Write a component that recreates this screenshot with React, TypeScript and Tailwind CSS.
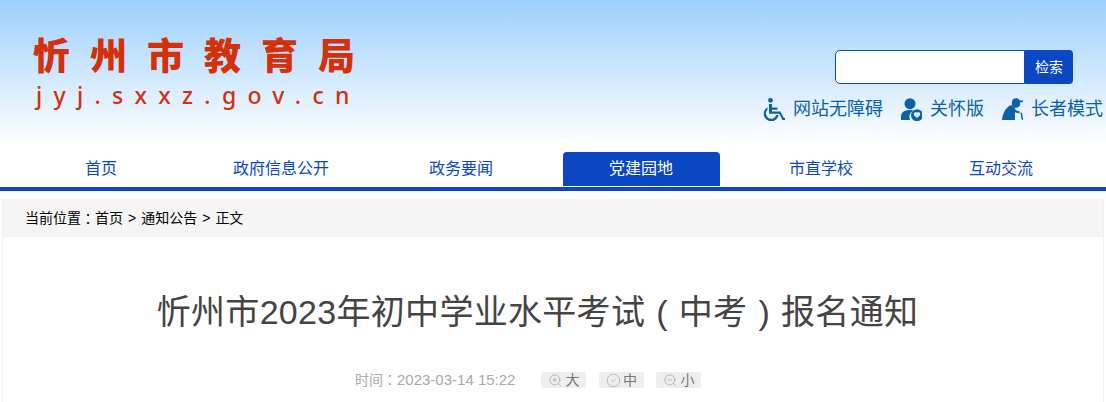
import { ZoomIn, ZoomOut, CircleCheck } from 'lucide-react'

const NAV = ['首页', '政府信息公开', '政务要闻', '党建园地', '市直学校', '互动交流']
const CJK = { fontFamily: '"Liberation Sans", "Noto Sans CJK SC", sans-serif' }
// centred full-width colon, as in the reference
const PUNCT = { fontFamily: '"Noto Sans CJK TC", sans-serif' }

function WheelchairIcon() {
  return (
    <svg viewBox="3 2 22 24" className="h-[24px] w-[22px] fill-[#0b62a8]">
      <circle cx="10.500" cy="5.300" r="2.400" />
      <path d="M9 9h3v3.500h5.500v2.200H12v1.800h8.500l3.300 6.500h1.200v2h-2.600l-3-6.300H9z" />
      <path d="M7.500 12.200v2.500a5.300 5.300 0 1 0 8.800 5.300h2.300a7.500 7.500 0 1 1-11.100-7.800z" />
    </svg>
  )
}

function CareIcon() {
  return (
    <svg viewBox="3 2 22 24" className="h-[24px] w-[22px] fill-[#0b62a8]">
      <circle cx="13" cy="8.700" r="5.500" />
      <path d="M4 25v-3.500c0-3.800 3-6.500 9-6.500 1.200 0 2.300.1 3.200.4a7.800 7.800 0 0 0-3.300 9.600z" />
      <path
        fillRule="evenodd"
        d="M20 14.200a6 6 0 1 1 0 12 6 6 0 0 1 0-12zm0 3.600c-1-.9-3.200-.4-3.200 1.400 0 1.500 1.800 2.600 3.200 3.500 1.400-.9 3.200-2 3.200-3.500 0-1.800-2.200-2.300-3.200-1.400z"
      />
    </svg>
  )
}

function ElderIcon() {
  return (
    <svg viewBox="3 2 22 24" className="h-[24px] w-[22px] fill-[#0b62a8]">
      <path d="M14 6.500c.3-2 2-3.200 4-3.200 1.700 0 3 .8 3.700 2.200H25v1.700h-3a4.200 4.200 0 1 1-8 .3z" />
      <path d="M12 10.500c2-.6 4 .3 4.800 2.300l.9 2.400 4 1.400-.6 1.900-4.100-1.200V25H4c.5-6 3.500-12 8-14.500z" />
      <path d="M22.300 17.500h1.500l1.500 7.500h-1.500z" />
    </svg>
  )
}

function FontButton({ icon, label }: { icon: React.ReactNode; label: string }) {
  return (
    <span className="flex h-[16px] w-[45px] items-center justify-center gap-[2px] rounded-[3px] bg-[#eeeeee] text-[14px] text-[#777777]">
      {icon}
      {label}
    </span>
  )
}

export default function App() {
  return (
    <div className="h-[402px] w-[1106px] overflow-hidden bg-white" style={CJK}>
      <header className="flex h-[145px] justify-between bg-gradient-to-b from-[#9dcfff] to-white">
        <div className="pl-[33px] pt-[35px]">
          <div className="text-[37px] font-black leading-[46px] tracking-[20px] text-[#d4300a]">忻州市教育局</div>
          <div
            className="ml-[3px] text-[23px] font-medium leading-[29px] tracking-[11.300px] text-[#d4300a]"
            style={{ fontFamily: '"Noto Sans", sans-serif' }}
          >
            jyj.sxxz.gov.cn
          </div>
        </div>
        <div className="flex flex-col items-end pr-[3px] pt-[50px]">
          <div className="mr-[30px] flex h-[34px] w-[238px]">
            <div className="flex-1 rounded-l-[5px] border border-[#0b47c2] bg-white" />
            <button className="w-[48px] rounded-r-[4px] bg-[#0b47c2] text-[14px] text-white">检索</button>
          </div>
          <div className="mt-[12px] flex items-center text-[18px] leading-[26px] text-[#0b62a8]">
            <WheelchairIcon />
            <span className="ml-[8px]">网站无障碍</span>
            <span className="ml-[17px]"><CareIcon /></span>
            <span className="ml-[8px]">关怀版</span>
            <span className="ml-[17px]"><ElderIcon /></span>
            <span className="ml-[8px]">长者模式</span>
          </div>
        </div>
      </header>

      <nav className="flex h-[46px] border-b-4 border-[#0b47c2] pl-[11px] pt-[7px]">
        {NAV.map((item, i) => (
          <div key={item} className="flex h-[34px] w-[180px] justify-center">
            <a
              className={
                i === 3
                  ? 'flex h-full w-[157px] items-center justify-center rounded-t-[4px] bg-[#0b47c2] text-[16px] text-white'
                  : 'flex h-full items-center text-[16px] text-[#0b47c2]'
              }
            >
              {item}
            </a>
          </div>
        ))}
      </nav>

      <main className="mx-[2px] mt-[8px] h-[220px] border-x border-[#f0f0f0]">
        <div className="flex h-[38px] items-center bg-[#f5f5f5] pl-[22px] text-[14px] text-black">
          当前位置<span style={PUNCT}>：</span>首页
          <span className="mx-[5px]">&gt;</span>通知公告
          <span className="mx-[5px]">&gt;</span>正文
        </div>
        <h1 className="mt-[51px] pr-[31px] text-center text-[34px] font-normal leading-[48px] tracking-[0.300px] text-[#444444]">
          忻州市2023年初中学业水平考试<span className="mx-[11px]">(</span>中考<span className="mx-[11px]">)</span>报名通知
        </h1>
        <div className="mt-[34px] flex h-[20px] items-center pl-[352px] text-[15px] text-[#aaaaaa]">
          <span>
            <span className="text-[14px]">时间</span>
            <span className="text-[14px]" style={PUNCT}>：</span>2023-03-14 15:22
          </span>
          <div className="ml-[26px] flex gap-[12.500px]">
            <FontButton icon={<ZoomIn size={15} strokeWidth={1.250} className="text-[#aaaaaa]" />} label="大" />
            <FontButton icon={<CircleCheck size={15} strokeWidth={1.250} className="text-[#aaaaaa]" />} label="中" />
            <FontButton icon={<ZoomOut size={15} strokeWidth={1.250} className="text-[#aaaaaa]" />} label="小" />
          </div>
        </div>
      </main>
    </div>
  )
}
